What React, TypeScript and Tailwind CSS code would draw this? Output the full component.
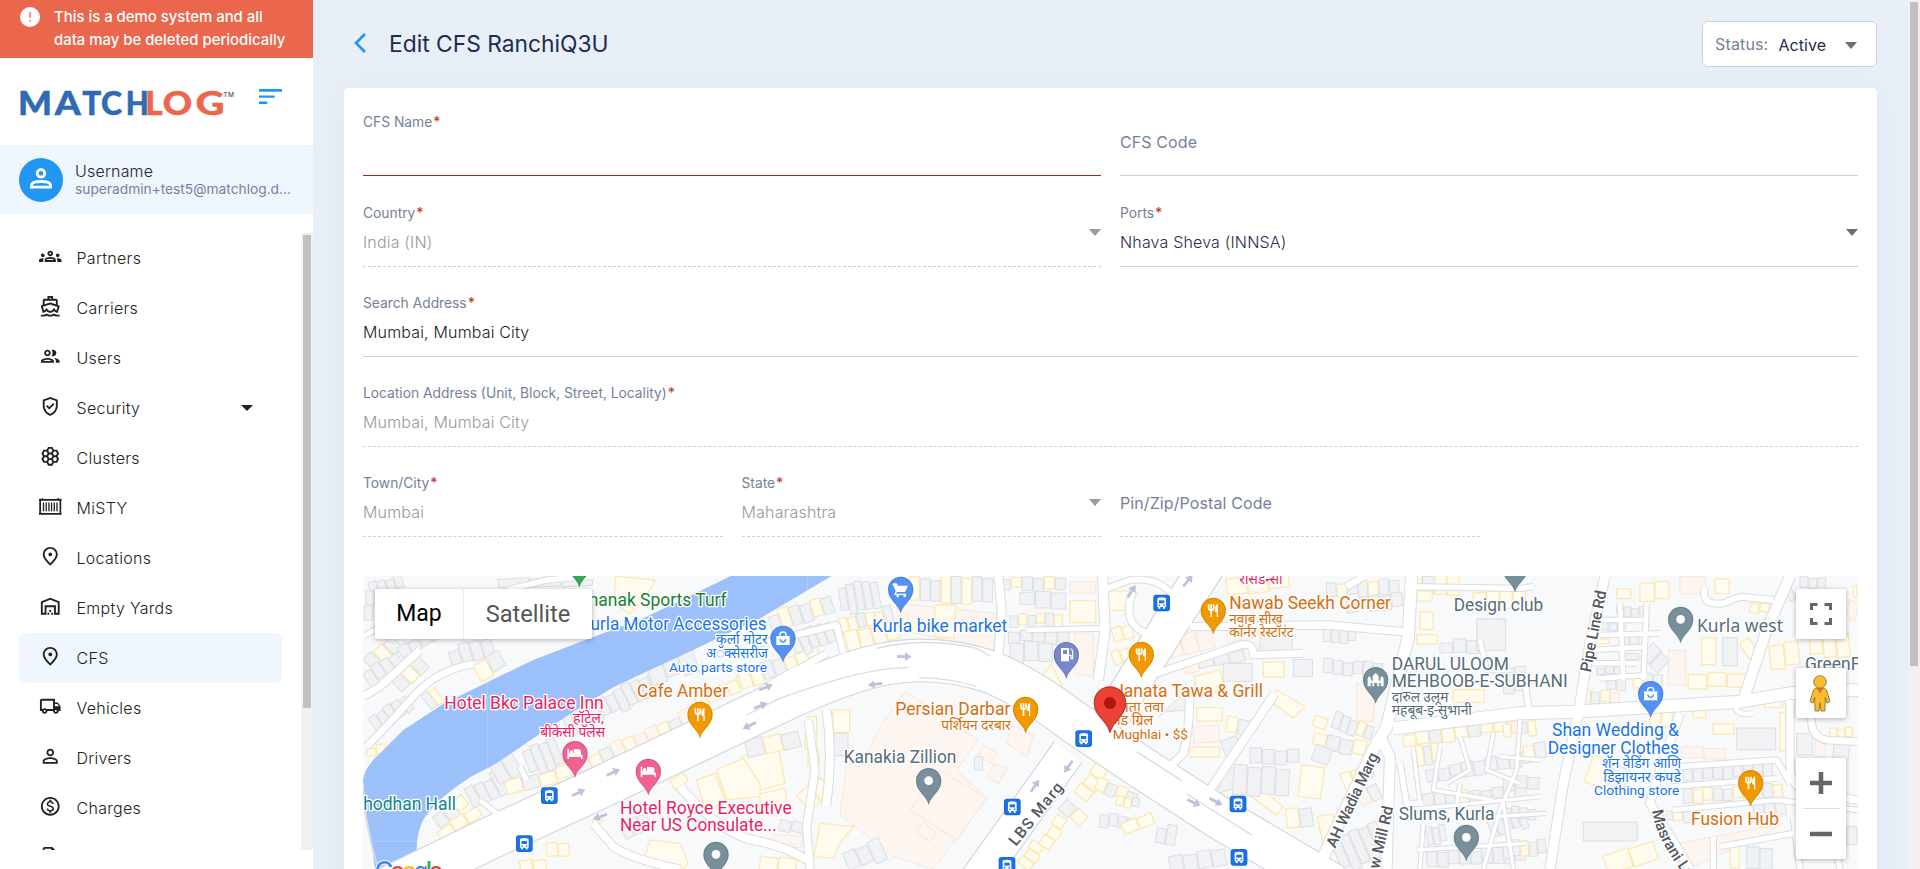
import React from "react";
import {
  MdOutlineGroups,
  MdOutlineDirectionsBoat,
  MdOutlinePeople,
  MdOutlineGppGood,
  MdOutlineHive,
  MdOutlinePlace,
  MdOutlineWarehouse,
  MdOutlineLocalShipping,
  MdPersonOutline,
  MdOutlineMonetizationOn,
  MdOutlineDescription,
} from "react-icons/md";

/* ---------- Sidebar ---------- */

function ContainerIcon({ className }: { className?: string }) {
  return (
    <svg viewBox="0 0 24 24" className={className} fill="none" stroke="currentColor">
      <path d="M0 5.2h24M0 20.200h24" strokeWidth="1.8" />
      <path d="M1.2 4v16M22.8 4v16" strokeWidth="1.8" />
      <path d="M3.6 5V3.2M20.4 5V3.2" strokeWidth="1.6" />
      <path d="M4.8 8v9.400M7.7 8v9.400M10.6 8v9.400M13.4 8v9.400M16.3 8v9.400M19.2 8v9.400" strokeWidth="1.4" />
    </svg>
  );
}

const NAV: { label: string; Icon: React.ComponentType<{ className?: string }>; active?: boolean; caret?: boolean }[] = [
  { label: "Partners", Icon: MdOutlineGroups },
  { label: "Carriers", Icon: MdOutlineDirectionsBoat },
  { label: "Users", Icon: MdOutlinePeople },
  { label: "Security", Icon: MdOutlineGppGood, caret: true },
  { label: "Clusters", Icon: MdOutlineHive },
  { label: "MiSTY", Icon: ContainerIcon },
  { label: "Locations", Icon: MdOutlinePlace },
  { label: "Empty Yards", Icon: MdOutlineWarehouse },
  { label: "CFS", Icon: MdOutlinePlace, active: true },
  { label: "Vehicles", Icon: MdOutlineLocalShipping },
  { label: "Drivers", Icon: MdPersonOutline },
  { label: "Charges", Icon: MdOutlineMonetizationOn },
  { label: "", Icon: MdOutlineDescription },
];

const LOGO: [string, number, number, string][] = [
  ["M", 54, 102, "#2f6bb5"],
  ["A", 164, 78, "#2f6bb5"],
  ["T", 247, 57, "#2f6bb5"],
  ["C", 303, 63, "#2f6bb5"],
  ["H", 377, 69, "#2f6bb5"],
  ["L", 436, 52, "#ec664e"],
  ["O", 488, 88, "#ec664e"],
  ["G", 587, 86, "#ec664e"],
];

function Logo() {
  return (
    <svg viewBox="51 262 654 93" className="h-[31px] w-[218px] overflow-visible">
      {LOGO.map(([ch, x, w, fill]) => (
        <text
          key={ch}
          x={x}
          y={346}
          textLength={w}
          lengthAdjust="spacingAndGlyphs"
          fill={fill}
          stroke={fill}
          strokeWidth="1.5"
          fontFamily="Lato, sans-serif"
          fontWeight="900"
          fontSize="99"
        >
          {ch}
        </text>
      ))}
      <text x="670" y="293" fontFamily="Inter, sans-serif" fontSize="20" textLength="32" fill="#333">
        TM
      </text>
    </svg>
  );
}

function Sidebar() {
  return (
    <aside className="flex h-full w-[313px] shrink-0 flex-col bg-white">
      <div className="flex h-[58px] gap-[14px] bg-[#ea674e] pt-[6px] pl-5 text-[14.9px] leading-[23px] font-medium text-white">
        <svg viewBox="0 0 20 20" className="mt-px size-5 shrink-0">
          <circle cx="10" cy="10" r="10" fill="#fff" />
          <path d="M10 5v6M10 12.8v1.6" stroke="#ea674e" strokeWidth="1.3" />
        </svg>
        <p className="w-[250px]">
          This is a demo system and all
          <br />
          data may be deleted periodically
        </p>
      </div>
      <div className="flex h-[87px] items-start justify-between pr-[31px] pl-[17px]">
        <div className="pt-[29px]">
          <Logo />
        </div>
        <svg viewBox="0 0 23 17" className="mt-[30px] h-[17px] w-[23px] shrink-0" fill="#2196f3">
          <path d="M0 1h23v2.8H0zM0 7.4h15.6v2.3H0zM0 13.6h8.2v2.4H0z" />
        </svg>
      </div>
      <div className="flex h-[69px] items-center gap-3 bg-[#eff6fe] pl-[19px]">
        <div className="flex size-11 items-center justify-center rounded-full bg-[#2196f3]">
          <svg viewBox="0 0 66 62" className="mb-[2px] h-[20.700px] w-[22px]" fill="none" stroke="#fff" strokeWidth="8.500">
            <circle cx="33" cy="16" r="11.500" />
            <path d="M4.500 57.500V52Q4.500 40.500 33 40.500T61.500 52V57.500Z" />
          </svg>
        </div>
        <div className="leading-[18px]">
          <div className="text-base leading-[18px] font-light tracking-[0.2px] text-[#212529]">Username</div>
          <div className="text-[13.75px] leading-[18px] text-[#7582a0]">superadmin+test5@matchlog.d...</div>
        </div>
      </div>
      <div className="mt-[19px] flex h-[617px] overflow-hidden">
        <nav className="w-[301px] shrink-0 pr-[19px] pl-[19px] text-base font-light tracking-[0.3px] text-[#212121]">
          {NAV.map(({ label, Icon, active, caret }, i) => (
            <div key={i} className={`flex h-[50px] items-center rounded-md pl-5 ${active ? "bg-[#eff6fe]" : ""}`}>
              <Icon className="mb-[3px] size-[22.5px] shrink-0" />
              <span className="ml-[15px] grow">{label}</span>
              {caret && <span className="mr-[29px] border-x-[6px] border-t-[6px] border-x-transparent border-t-[#212121]" />}
            </div>
          ))}
        </nav>
        <div className="w-3 bg-[#f1f1f1] px-0.5 pt-0.5">
          <div className="h-[473px] bg-[#c1c1c1]" />
        </div>
      </div>
    </aside>
  );
}

/* ---------- Form ---------- */

type FieldProps = {
  label: string;
  value?: string;
  required?: boolean;
  disabled?: boolean;
  select?: boolean;
  invalid?: boolean;
  tone?: string;
};

function Field({ label, value, required, disabled, select, invalid, tone = "text-[#1f2d4d]" }: FieldProps) {
  const line = invalid ? "border-solid border-[#a1281e]" : disabled ? "border-dashed border-[#ced0da]" : "border-solid border-[#ced0da]";
  const empty = value === undefined;
  return (
    <div className={`flex h-full flex-col justify-end border-b ${line}`}>
      {empty ? (
        <div className="mb-[23px] leading-5 tracking-[0.1px] text-[#75819b]">{label}</div>
      ) : (
        <>
          <div className="text-[13.8px] leading-5 text-[#75819b]">
            {label}
            {required && <span className="ml-px font-medium text-[#c0392b]">*</span>}
          </div>
          <div className={`mt-[9px] mb-[14px] flex h-5 items-start justify-between leading-5 font-light tracking-[0.17px] ${disabled ? "text-[#999]" : tone}`}>
            <span>{value}</span>
            {select && (
              <span className={`-mt-[3px] border-x-[6px] border-t-[7px] border-x-transparent ${disabled ? "border-t-[#9b9b9b]" : "border-t-[#6f6f6f]"}`} />
            )}
          </div>
        </>
      )}
    </div>
  );
}

/* ---------- Map (drawn at 3 units per pixel) ---------- */

type Tone = "y" | "g" | "p";
const FILL: Record<Tone, string> = { y: "#fffbee", g: "#f0f2f4", p: "#fdf5ef" };
const EDGE: Record<Tone, string> = { y: "#fce9b3", g: "#dcdfe3", p: "#fae6d8" };

/* x1, y1, x2, y2, count, depth, tone pattern */
type Strip = [number, number, number, number, number, number, string];
const STRIPS: Strip[] = [
  [415, 45, 700, 30, 3, 30, "g"],
  [30, 60, 130, 30, 4, 45, "g"],
  [30, 150, 30, 60, 2, 30, "gg"],
  [30, 290, 110, 210, 3, 60, "gyg"],
  [20, 330, 120, 260, 4, 50, "g"],
  [120, 250, 240, 180, 4, 45, "g"],
  [270, 265, 400, 225, 4, 60, "g"],
  [110, 350, 190, 270, 3, 55, "gyg"],
  [40, 470, 150, 390, 5, 60, "g"],
  [200, 400, 240, 370, 2, 55, "gy"],
  [350, 310, 430, 265, 2, 60, "yg"],
  [20, 545, 80, 540, 2, 30, "y"],
  [230, 760, 320, 690, 3, 50, "ggy"],
  [240, 800, 360, 720, 3, 40, "yy"],
  [330, 690, 460, 620, 5, 80, "gggg"],
  [400, 610, 470, 570, 2, 80, "gg"],
  [440, 660, 640, 600, 4, 45, "ygyy"],
  [500, 580, 600, 540, 4, 90, "ggg"],
  [620, 470, 900, 330, 11, 70, "g"],
  [660, 600, 1000, 440, 10, 60, "pygpyp"],
  [1010, 400, 1200, 310, 6, 45, "yyp"],
  [870, 320, 1010, 270, 3, 70, "g"],
  [1140, 330, 1380, 250, 7, 60, "yyggy"],
  [1300, 230, 1420, 180, 5, 70, "g"],
  [1230, 160, 1420, 100, 6, 60, "gyg"],
  [1440, 90, 1560, 70, 5, 90, "g"],
  [1440, 170, 1600, 130, 6, 50, "yyg"],
  [1460, 220, 1620, 180, 4, 70, "y"],
  [1650, 60, 1900, 60, 8, 85, "yggyg"],
  [1920, 40, 2120, 40, 6, 40, "gyg"],
  [1980, 90, 2120, 90, 3, 50, "g"],
  [1950, 150, 2110, 150, 6, 40, "gy"],
  [1945, 200, 2130, 200, 5, 40, "g"],
  [1950, 245, 2080, 245, 3, 60, "g"],
  [2130, 52, 2210, 52, 1, 40, "p"],
  [2130, 125, 2210, 125, 1, 90, "y"],
  [2245, 90, 2310, 90, 1, 80, "y"],
  [2260, 200, 2320, 180, 2, 50, "yy"],
  [2260, 270, 2310, 250, 2, 50, "yy"],
  [1160, 540, 1320, 500, 3, 55, "gy"],
  [1355, 440, 1355, 590, 3, 35, "yy"],
  [1445, 420, 1445, 560, 2, 50, "yg"],
  [1330, 700, 1400, 640, 2, 60, "y"],
  [1260, 760, 1330, 780, 2, 40, "gg"],
  [1240, 815, 1330, 820, 1, 40, "p"],
  [1460, 880, 1570, 830, 3, 70, "g"],
  [1200, 880, 1310, 895, 2, 60, "y"],
  [2160, 680, 2230, 590, 3, 50, "y"],
  [2050, 830, 2110, 740, 3, 45, "y"],
  [1990, 890, 2040, 820, 3, 45, "y"],
  [2210, 640, 2330, 690, 4, 45, "yg"],
  [2110, 700, 2170, 760, 2, 40, "gy"],
  [2220, 750, 2330, 760, 4, 40, "g"],
  [2270, 690, 2340, 700, 3, 35, "yyg"],
  [2290, 780, 2380, 740, 2, 40, "yy"],
  [2390, 790, 2450, 800, 2, 60, "g"],
  [2430, 890, 2600, 860, 4, 60, "g"],
  [2600, 50, 2790, 30, 3, 50, "y"],
  [2470, 290, 2700, 240, 5, 45, "pggg"],
  [2420, 240, 2560, 200, 3, 70, "p"],
  [2600, 200, 2680, 180, 2, 45, "p"],
  [2700, 230, 2800, 230, 1, 90, "g"],
  [2890, 190, 2990, 190, 4, 60, "g"],
  [2900, 60, 3120, 50, 7, 50, "gyg"],
  [2960, 110, 3130, 90, 5, 45, "gg"],
  [2890, 290, 3070, 300, 6, 50, "g"],
  [2800, 290, 2860, 290, 1, 60, "g"],
  [2590, 310, 2680, 310, 1, 60, "g"],
  [2510, 350, 2590, 330, 1, 60, "y"],
  [2710, 298, 2775, 298, 1, 55, "y"],
  [2510, 435, 2590, 435, 1, 42, "y"],
  [2500, 490, 2580, 485, 1, 50, "p"],
  [2490, 545, 2580, 545, 1, 40, "y"],
  [2600, 460, 2670, 470, 2, 60, "yg"],
  [2590, 540, 2640, 520, 1, 50, "g"],
  [2670, 560, 2820, 560, 4, 45, "g"],
  [2620, 630, 2790, 640, 4, 90, "gg"],
  [2860, 455, 2900, 470, 1, 32, "y"],
  [2860, 510, 3020, 540, 4, 45, "yggy"],
  [2920, 450, 3040, 490, 5, 55, "gggy"],
  [2860, 550, 2910, 570, 1, 60, "g"],
  [2820, 630, 2890, 640, 1, 95, "y"],
  [2780, 750, 2860, 740, 2, 60, "yg"],
  [2880, 780, 2930, 770, 1, 100, "y"],
  [2950, 640, 3040, 600, 3, 60, "yyg"],
  [2930, 860, 3070, 800, 5, 110, "g"],
  [3000, 690, 3060, 660, 2, 60, "pg"],
  [3150, 40, 3300, 40, 4, 70, "ygy"],
  [3170, 80, 3220, 80, 1, 35, "y"],
  [3340, 90, 3500, 90, 4, 60, "y"],
  [3180, 150, 3222, 150, 1, 60, "y"],
  [3170, 210, 3235, 210, 1, 28, "y"],
  [3240, 230, 3360, 230, 3, 40, "g"],
  [3350, 190, 3440, 190, 1, 100, "g"],
  [3280, 380, 3375, 380, 1, 42, "y"],
  [3130, 510, 3480, 460, 9, 45, "yyg"],
  [3170, 560, 3240, 550, 3, 60, "yg"],
  [3200, 620, 3520, 560, 9, 45, "gg"],
  [3190, 700, 3500, 660, 9, 45, "gggy"],
  [3200, 800, 3260, 790, 3, 60, "g"],
  [3390, 780, 3500, 740, 5, 60, "g"],
  [3200, 870, 3500, 850, 9, 50, "g"],
  [3430, 330, 3500, 330, 2, 80, "g"],
  [3430, 480, 3530, 470, 4, 45, "ypg"],
  [3490, 550, 3560, 540, 2, 60, "yg"],
  [3430, 640, 3540, 640, 3, 45, "g"],
  [3430, 730, 3530, 730, 4, 40, "g"],
  [3430, 840, 3560, 830, 5, 50, "ggy"],
  [3770, 75, 3815, 75, 1, 38, "y"],
  [3840, 65, 3930, 65, 2, 60, "y"],
  [3960, 50, 4040, 50, 1, 55, "p"],
  [4065, 45, 4110, 45, 1, 50, "y"],
  [3770, 125, 3860, 125, 4, 28, "g"],
  [3720, 170, 3800, 170, 3, 25, "g"],
  [3780, 210, 3840, 210, 2, 35, "g"],
  [3700, 215, 3750, 212, 1, 18, "y"],
  [3780, 260, 3840, 260, 1, 20, "g"],
  [3710, 300, 3790, 300, 3, 25, "g"],
  [3740, 345, 3800, 345, 2, 40, "g"],
  [3820, 330, 3910, 330, 3, 40, "ygg"],
  [3665, 380, 3780, 385, 4, 40, "ygyp"],
  [3860, 240, 3915, 290, 2, 60, "g"],
  [3925, 290, 3980, 290, 1, 120, "p"],
  [4025, 245, 4070, 245, 1, 80, "y"],
  [4088, 245, 4135, 245, 1, 85, "g"],
  [3985, 330, 4160, 330, 3, 45, "y"],
  [4150, 240, 4180, 220, 1, 60, "y"],
  [4230, 260, 4320, 250, 2, 75, "y"],
  [4280, 70, 4300, 60, 1, 50, "g"],
  [4170, 110, 4230, 120, 2, 35, "yy"],
  [4320, 40, 4400, 40, 3, 40, "g"],
  [4480, 60, 4494, 60, 1, 40, "y"],
  [4460, 120, 4494, 130, 1, 60, "p"],
  [4350, 230, 4470, 220, 3, 70, "y"],
  [4060, 475, 4125, 475, 1, 42, "y"],
  [4000, 430, 4040, 428, 1, 32, "y"],
  [4130, 510, 4250, 510, 1, 90, "g"],
  [4260, 480, 4295, 480, 1, 140, "y"],
  [4215, 400, 4270, 400, 1, 30, "y"],
  [3965, 550, 4100, 550, 2, 40, "p"],
  [3970, 610, 4240, 600, 9, 50, "g"],
  [3970, 680, 4270, 660, 10, 45, "gyyg"],
  [3910, 740, 4000, 735, 3, 35, "gy"],
  [3670, 785, 3835, 785, 1, 60, "g"],
  [3685, 600, 3800, 640, 2, 110, "yg"],
  [3870, 450, 3940, 450, 2, 60, "y"],
  [3740, 890, 3890, 840, 2, 60, "y"],
  [4110, 860, 4140, 860, 1, 90, "y"],
  [4160, 865, 4240, 865, 2, 80, "g"],
  [4180, 720, 4280, 710, 3, 40, "g"],
  [4310, 520, 4360, 520, 1, 70, "g"],
  [4365, 530, 4400, 530, 1, 70, "p"],
  [4410, 490, 4480, 490, 3, 30, "y"],
  [4420, 540, 4470, 545, 1, 50, "g"],
  [4460, 800, 4494, 800, 1, 60, "g"],
  [700, 760, 730, 745, 1, 20, "y"],
  [790, 790, 870, 750, 3, 50, "g"],
  [940, 650, 980, 620, 1, 40, "y"],
  [560, 840, 630, 835, 2, 40, "y"],
  [480, 890, 560, 880, 2, 35, "y"],
];

const POLYS: [string, Tone][] = [
  ["1635,365 1855,510 1790,600 1880,685 1720,897 1600,860 1440,735 1460,580 1500,590 1560,470", "p"],
  ["1740,600 1880,685 1790,810 1650,720", "p"],
  ["1690,755 1730,790 1710,815 1668,785", "p"],
  ["1870,525 1915,550 1890,580 1855,555", "p"],
  ["1900,580 1942,595 1915,640 1882,622", "p"],
  ["1955,465 2022,495 2000,560 1940,520", "p"],
  ["1843,560 1868,560 1868,600 1843,600", "g"],
  ["2075,282 2122,385 2040,325", "y"],
  ["2145,190 2200,190 2200,320 2145,310", "p"],
  ["1610,100 1910,130 1900,240 1620,180", "p"],
  ["1725,105 1787,105 1782,205 1725,200", "y"],
  ["2750,360 2835,410 2800,445 2735,395", "y"],
  ["2665,625 2770,710 2750,735 2640,655", "y"],
  ["2585,590 2660,600 2640,650 2575,670", "g"],
  ["1145,560 1255,535 1275,640 1180,665", "y"],
  ["1380,760 1480,770 1440,820 1420,865 1362,860", "y"],
  ["765,18 885,30 870,60 810,132 765,100", "y"],
  ["870,810 960,820 985,880 970,897 855,860", "y"],
  ["1010,630 1065,610 1100,700 1035,720", "y"],
  ["1070,600 1150,565 1200,640 1200,680 1100,690", "y"],
  ["1200,672 1275,655 1280,700 1200,720", "y"],
  ["2990,340 3045,350 3040,455 2990,450", "p"],
  ["3960,820 4270,760 4200,800 4000,890", "p"],
  ["2395,440 2480,360 2490,420 2420,425", "g"],
];

const ROADS: [string, number][] = [
  ["M9 380L60 350L180 240", 22],
  ["M340 282Q230 300 160 380T20 530", 20],
  ["M440 60L560 30L700 18", 16],
  ["M9 200L60 170", 14],
  ["M480 590L500 630", 16],
  ["M360 690L410 730", 14],
  ["M1140 410Q1240 330 1330 290L1400 250", 20],
  ["M700 760L760 830Q820 870 960 897", 22],
  ["M960 650Q1080 790 1180 810T1340 870", 24],
  ["M1400 420Q1420 560 1398 710", 24],
  ["M1345 450L1365 600L1340 770L1350 897", 22],
  ["M1160 230L1430 165L1450 250", 18],
  ["M1915 18L1925 120L1915 270", 24],
  ["M2228 18L2235 180L2215 330", 28],
  ["M2000 180L2230 175", 14],
  ["M2230 60L2310 30Q2400 20 2440 80", 18],
  ["M2320 60Q2280 160 2360 190", 20],
  ["M2490 170L2900 165L3130 185", 22],
  ["M2390 310L2640 225Q2680 215 2680 255L2830 250", 20],
  ["M2490 335Q2490 480 2470 550L2430 590", 22],
  ["M2745 370L2550 660", 24],
  ["M2960 50L3010 20", 20],
  ["M3155 18L3145 200L3080 470L3040 540L2890 860L2870 897", 34],
  ["M3060 500L3090 560L3085 700L3080 897", 30],
  ["M3120 580L3140 700L3190 700", 16],
  ["M3100 475L3480 430L3640 425L4140 395L4290 370L4494 360", 36],
  ["M3135 50L3480 55L3520 50", 16],
  ["M3510 440L3495 340", 16],
  ["M3735 18L3690 220L3655 430L3610 640L3570 897", 28],
  ["M4290 18L4220 180L4150 390", 30],
  ["M4035 50Q4020 110 4090 100L4140 80L4240 90", 18],
  ["M3960 430L3900 600L3870 700L3990 897", 24],
  ["M4290 390L4290 590Q4290 650 4350 670L4494 690", 22],
  ["M4355 440Q4350 500 4400 510L4494 515", 20],
  ["M3960 590L4250 570L4290 640", 16],
  ["M3930 650L4250 625", 14],
  ["M3940 720L4250 690L4494 720", 14],
  ["M4130 400Q4120 440 4180 430", 14],
  ["M3720 150L3850 150M3720 195L3900 190M3700 240L3860 230M3700 280L3830 280M3780 100L3790 330M3860 100L3850 330M3720 325L3860 315", 14],
  ["M3160 540L3180 700M3240 530L3220 660L3400 690M3300 500L3330 600L3260 640M3400 490L3380 600L3480 640M3480 450L3470 600L3420 720L3370 897M3140 720L3540 680M3190 760L3180 897M3290 700L3300 640M3420 560L3540 570M3400 740L3560 730M3430 700L3460 897M3170 840L3500 820", 10],
  ["M4060 800L4060 897M4080 830L4300 790M4300 740L4320 897M4410 740L4440 897", 16],
  ["M3360 210L3380 300L3450 300", 14],
];

const HIGHWAYS: [string, number][] = [
  ["M20 985L400 800L700 662L1240 405Q1440 310 1560 285Q1720 250 1890 305Q2010 355 2140 455L2340 590L2580 745L2920 945", 124],
  ["M2125 545L1850 930", 100],
  ["M2255 440L2425 170L2540 -10", 104],
];

const PINS: [number, number, string, "fork" | "bed" | "cart" | "bag" | "fuel" | "dot" | "dome" | "none"][] = [
  [658, -20, "#34a853", "none"],
  [1020, 433, "#f29900", "fork"],
  [1997, 418, "#f29900", "fork"],
  [2344, 253, "#f29900", "fork"],
  [2560, 121, "#f29900", "fork"],
  [4172, 638, "#f29900", "fork"],
  [645, 551, "#f06292", "bed"],
  [865, 604, "#f06292", "bed"],
  [1622, 58, "#5491f5", "cart"],
  [1269, 205, "#5491f5", "bag"],
  [3872, 371, "#5491f5", "bag"],
  [2119, 254, "#7986cb", "fuel"],
  [1068, 853, "#78909c", "dot"],
  [1706, 632, "#78909c", "dot"],
  [3319, 802, "#78909c", "dot"],
  [3962, 148, "#78909c", "dot"],
  [3465, -5, "#78909c", "none"],
  [3047, 329, "#78909c", "dome"],
];

const GLYPHS = {
  none: null,
  dot: <circle r="13" fill="#fff" />,
  fork: (
    <g fill="none" stroke="#fff">
      <path d="M-14 -18v12q0 6 7.500 6t7.500 -6v-12M-6.500 -18v38" strokeWidth="5" />
      <path d="M12 20v-38q-8 6 -6 22h6z" strokeWidth="3" fill="#fff" />
    </g>
  ),
  bed: (
    <g fill="#fff">
      <path d="M-23 -14h5v18h36v-10q0 -7 -8 -7h-14v12h-13h-1v5h41v12h-5v-6h-36v6h-5z" />
      <circle cx="-11" cy="-5" r="5" />
    </g>
  ),
  cart: (
    <g fill="#fff">
      <path d="M-22 -18h10l4 7h30l-9 19h-24l-3 5h30v4h-36l5 -12l-8 -18h-3z" />
      <circle cx="-9" cy="20" r="4" />
      <circle cx="12" cy="20" r="4" />
    </g>
  ),
  bag: (
    <g>
      <path d="M-20 -7h40v27h-40z" fill="#fff" />
      <path d="M-9 -7v-4q0 -8 9 -8t9 8v4" fill="none" stroke="#fff" strokeWidth="4" />
      <path d="M-9 2q2 9 9 9t9 -9" fill="none" stroke="#5491f5" strokeWidth="4" />
    </g>
  ),
  fuel: (
    <g>
      <path d="M-16 -20h24v40h-24z" fill="#fff" />
      <path d="M-10 -14h12v12h-12z" fill="#7986cb" />
      <path d="M8 2h6v10h5v-24l-6 -6" fill="none" stroke="#fff" strokeWidth="3.500" />
    </g>
  ),
  dome: (
    <path
      d="M-24 20V-4l5 -7l5 7v7h5v-13q0 -2 9 -10q9 8 9 10v13h5v-7l5 -7l5 7V20h-9v-10h-5v10h-5v-8q-5 -6 -10 0v8h-5v-10h-5v10z"
      fill="#fff"
    />
  ),
};

const BUSES: [number, number][] = [
  [568, 677],
  [493, 821],
  [2171, 506],
  [1957, 711],
  [1941, 886],
  [2405, 99],
  [2634, 702],
  [2637, 862],
];

const ARROWS: [number, number, number][] = [
  [760, 607, -25],
  [656, 668, -25],
  [720, 740, 160],
  [1168, 467, 155],
  [1202, 407, -22],
  [1218, 352, -22],
  [1633, 260, 2],
  [1545, 343, 172],
  [2125, 590, 125],
  [2025, 647, -55],
  [2315, 64, -58],
  [2484, 32, -50],
  [2502, 698, 25],
  [2568, 695, 28],
];

const BLUE = "#1a73e8";
const ORANGE = "#d56e0c";
const PINK = "#e91e63";
const SLATE = "#546e7a";

/* text, x, baseline, colour, size, anchor, fitted width (0 = natural) */
type Label = [string, number, number, string, number, "start" | "end", number];
const LABELS: Label[] = [
  ["nanak Sports Turf", 1100, 108, "#188038", 52.3, "end", 414],
  ["Kurla Motor Accessories", 1220, 181, BLUE, 52.3, "end", 560],
  ["कुर्ला मोटर", 1223, 223, BLUE, 43, "end", 155],
  ["अॅक्सेसरीज", 1224, 265, BLUE, 43, "end", 186],
  ["Auto parts store", 1221, 306, BLUE, 41, "end", 294],
  ["Kurla bike market", 1537, 185, BLUE, 52.3, "start", 405],
  ["Cafe Amber", 831, 380, ORANGE, 52.3, "start", 273],
  ["Hotel Bkc Palace Inn", 253, 416, PINK, 52.3, "start", 478],
  ["हॉटेल,", 731, 460, PINK, 43, "end", 92],
  ["बीकेसी पॅलेस", 735, 501, PINK, 43, "end", 194],
  ["Yashodhan Hall", 288, 721, "#12848f", 52.3, "end", 0],
  ["Hotel Royce Executive", 780, 731, PINK, 52.3, "start", 515],
  ["Near US Consulate...", 780, 783, PINK, 52.3, "start", 470],
  ["Persian Darbar", 1606, 435, ORANGE, 52.3, "start", 345],
  ["पर्शियन दरबार", 1953, 479, ORANGE, 43, "end", 209],
  ["Kanakia Zillion", 1451, 579, SLATE, 52.3, "start", 338],
  ["Janata Tawa & Grill", 2709, 382, ORANGE, 52.3, "end", 0],
  ["जनता तवा", 2412, 425, ORANGE, 43, "end", 0],
  ["अँड ग्रिल", 2380, 466, ORANGE, 43, "end", 0],
  ["Mughlai • $$", 2258, 507, ORANGE, 41, "start", 226],
  ["रेसिडेन्सी", 2638, 41, PINK, 43, "start", 130],
  ["Nawab Seekh Corner", 2608, 118, ORANGE, 52.3, "start", 485],
  ["नवाब सीख", 2608, 161, ORANGE, 43, "start", 160],
  ["कॉर्नर रेस्टॉरंट", 2608, 202, ORANGE, 43, "start", 193],
  ["DARUL ULOOM", 3095, 300, SLATE, 52.3, "start", 352],
  ["MEHBOOB-E-SUBHANI", 3095, 352, SLATE, 52.3, "start", 528],
  ["दारुल उलूम", 3095, 396, SLATE, 43, "start", 170],
  ["महबूब-इ-सुभानी", 3095, 436, SLATE, 43, "start", 241],
  ["Design club", 3281, 122, SLATE, 52.3, "start", 269],
  ["Slums, Kurla", 3116, 750, SLATE, 52.3, "start", 287],
  ["GreenField", 4335, 300, SLATE, 52.3, "start", 0],
  ["Shan Wedding &", 3957, 499, BLUE, 52.3, "end", 381],
  ["Designer Clothes", 3957, 551, BLUE, 52.3, "end", 394],
  ["शॅन वेडिंग आणि", 3963, 594, BLUE, 43, "end", 237],
  ["डिझायनर कपडे", 3963, 635, BLUE, 43, "end", 233],
  ["Clothing store", 3958, 676, BLUE, 41, "end", 256],
  ["Fusion Hub", 3993, 766, ORANGE, 52.3, "start", 264],
];

function StripBlocks({ s }: { s: Strip }) {
  const [x1, y1, x2, y2, n, depth, tones] = s;
  const len = Math.hypot(x2 - x1, y2 - y1);
  const deg = (Math.atan2(y2 - y1, x2 - x1) * 180) / Math.PI;
  const step = len / n;
  return (
    <g transform={`translate(${x1} ${y1}) rotate(${deg})`}>
      {Array.from({ length: n }, (_, i) => {
        const tone = tones[i % tones.length] as Tone;
        const jitter = ((i * 37 + x1 * 7) % 11) - 5;
        const h = depth * (1 - ((i * 29 + y1) % 7) * 0.045);
        return (
          <rect
            key={i}
            x={i * step}
            y={-h / 2 + jitter}
            width={Math.max(step - 3, 8)}
            height={h}
            fill={FILL[tone]}
            stroke={EDGE[tone]}
            strokeWidth={tone === "y" ? 4 : 3}
          />
        );
      })}
    </g>
  );
}

function CityMap() {
  return (
    <svg viewBox="9 18 4485 879" className="block h-[293px] w-[1495px]" fontFamily='Roboto, "Noto Sans", sans-serif'>
      <rect x="9" y="18" width="4485" height="879" fill="#f8f9fb" />
      {POLYS.map(([pts, t]) => (
        <polygon key={pts} points={pts} fill={FILL[t]} stroke={EDGE[t]} strokeWidth={t === "y" ? 4 : 3} />
      ))}
      {STRIPS.map((s, i) => (
        <StripBlocks key={i} s={s} />
      ))}
      <path
        d="M1112 18L985 80L850 145L690 205L520 270L400 328L250 402L130 480L60 550Q15 590 9 630V690L30 790L45 897H160L170 840Q170 780 195 740Q240 680 330 622L410 580L520 505L640 425L760 352L870 300L1000 240L1100 192L1200 145L1415 18Z"
        fill="#9cc0f9"
      />
      <g fill="none" strokeLinejoin="round">
        {ROADS.map(([d, w]) => (
          <path key={d} d={d} stroke="#dadde1" strokeWidth={w + 6} />
        ))}
        {HIGHWAYS.map(([d, w]) => (
          <path key={d} d={d} stroke="#d3d6db" strokeWidth={w + 7} />
        ))}
        {ROADS.map(([d, w]) => (
          <path key={d} d={d} stroke="#fff" strokeWidth={w} />
        ))}
        {HIGHWAYS.map(([d, w]) => (
          <path key={d} d={d} stroke="#fff" strokeWidth={w} />
        ))}
        <path d="M1160 435L1260 385Q1520 290 1645 293M1677 323Q1770 325 1850 350" stroke="#d9dce0" strokeWidth="4" />
        <path d="M1548 235Q1700 200 1850 235L1890 258M2330 545L2465 632M2480 672L2675 795" stroke="#d9dce0" strokeWidth="4" />
        <path d="M9 640Q12 760 50 880" stroke="#dadde1" strokeWidth="5" />
      </g>
      <path d="M382 18v879M1342 18v879M2302 18v879M3262 18v879M4222 18v879M9 814h4485" stroke="#fff" strokeOpacity="0.3" strokeWidth="2" />

      {ARROWS.map(([x, y, r], i) => (
        <path
          key={i}
          d="M-22 -4H2V-13L22 0L2 13V4H-22Z"
          transform={`translate(${x} ${y}) rotate(${r})`}
          fill="#bcc2d8"
        />
      ))}
      {BUSES.map(([x, y], i) => (
        <g key={i} transform={`translate(${x} ${y})`}>
          <rect x="-25" y="-25" width="50" height="50" rx="9" fill="#1967d2" />
          <rect x="-22" y="-23" width="44" height="45" rx="7" fill="#1a73e8" />
          <path d="M-13 -12q0 -5 13 -5t13 5v24h-3v5h-6v-5h-8v5h-6v-5h-3z" fill="#fff" />
          <path d="M-8 -8h16v9h-16z" fill="#1a73e8" />
          <circle cx="-7" cy="7" r="2.500" fill="#1a73e8" />
          <circle cx="7" cy="7" r="2.500" fill="#1a73e8" />
        </g>
      ))}

      <g stroke="#fff" strokeWidth="8" strokeLinejoin="round" style={{ paintOrder: "stroke" }}>
        {LABELS.map(([t, x, y, fill, size, anchor, w]) => (
          <text
            key={t}
            x={x}
            y={y}
            fill={fill}
            fontSize={size}
            textAnchor={anchor}
            {...(w ? { textLength: w, lengthAdjust: "spacingAndGlyphs" as const } : {})}
          >
            {t}
          </text>
        ))}
        <text x="4011" y="186" fill={SLATE} fontSize="52.300" fontFamily='"Noto Sans", sans-serif' textLength="258">
          Kurla west
        </text>
        <g fill="#54595f" fontSize="47" fontWeight="500">
          <text transform="translate(1968 830) rotate(-51)" textLength="228">
            LBS Marg
          </text>
          <text transform="translate(2926 836) rotate(-65)" textLength="308">
            AH Wadia Marg
          </text>
          <text transform="translate(3100 712) rotate(-77)" textAnchor="end">
            New Mill Rd
          </text>
          <text transform="translate(3692 308) rotate(-79)" textLength="248">
            Pipe Line Rd
          </text>
          <path id="masrani" d="M3877 722C3885 790 3925 850 3985 935" fill="none" stroke="none" />
          <text>
            <textPath href="#masrani">Masrani Ln</textPath>
          </text>
        </g>
      </g>

      {PINS.map(([x, y, c, k], i) => (
        <g key={i} transform={`translate(${x} ${y})`}>
          <path d="M0 72C-6 44 -38 34 -38 0A38 38 0 0 1 38 0C38 34 6 44 0 72Z" fill={c} />
          <path d="M0 70C-6 44 -36 34 -36 0A36 36 0 0 1 36 0C36 34 6 44 0 70Z" fill="none" stroke="#000" strokeOpacity="0.12" strokeWidth="3" />
          {GLYPHS[k]}
        </g>
      ))}
      <g transform="translate(2250 400)">
        <path d="M0 88C-6 52 -47 40 -47 -2A47 47 0 0 1 47 -2C47 40 6 52 0 88Z" fill="#ea4335" stroke="#c5372c" strokeWidth="4" />
        <circle r="18" cy="-1" fill="#b31412" />
      </g>

      <text x="44" y="931" fontFamily="Inter, sans-serif" fontWeight="500" fontSize="76" textLength="206" stroke="#fff" strokeWidth="6" style={{ paintOrder: "stroke" }}>
        <tspan fill="#4285f4">G</tspan>
        <tspan fill="#ea4335">o</tspan>
        <tspan fill="#fbbc04">o</tspan>
        <tspan fill="#4285f4">g</tspan>
        <tspan fill="#34a853">l</tspan>
        <tspan fill="#ea4335">e</tspan>
      </text>
    </svg>
  );
}

function MapPanel() {
  return (
    <div className="relative mt-[39px] h-[293px] w-[1495px] overflow-hidden">
      <CityMap />
      <div className="absolute top-[13px] left-3 flex h-[50px] rounded-[2px] bg-white font-[Roboto,sans-serif] text-[23px] shadow-[0_1px_5px_rgba(0,0,0,0.3)]">
        <div className="flex w-[89px] items-center justify-center border-r border-[#ececec] pt-px font-normal text-black">Map</div>
        <div className="flex w-[128px] items-center justify-center pt-px text-[23.6px] text-[#565656]">Satellite</div>
      </div>
      <div className="absolute top-[13px] right-3 flex size-[50px] items-center justify-center rounded-[2px] bg-white shadow-[0_1px_5px_rgba(0,0,0,0.3)]">
        <svg viewBox="0 0 22 22" className="size-[22px]" fill="none" stroke="#666" strokeWidth="3">
          <path d="M1.500 7V1.500H7.500M14.500 1.500H20.500V7M20.500 15V20.500H14.500M7.500 20.500H1.500V15" />
        </svg>
      </div>
      <div className="absolute top-[92px] right-3 flex size-[50px] items-center justify-center rounded-[2px] bg-white shadow-[0_1px_5px_rgba(0,0,0,0.3)]">
        <svg viewBox="0 0 66 112" className="mr-[2px] h-[37px] w-[22px]" fill="#fbbc2c" stroke="#7a6a3a" strokeWidth="2.500" strokeLinejoin="round">
          <path d="M20 40H46Q53 42 55 52L63 80L54 85L49 68L48 109H36L33 84L30 109H18L17 68L12 85L3 80L11 52Q13 42 20 40Z" />
          <path d="M23 41L33 56L43 41Z" fill="#e37426" stroke="none" />
          <circle cx="33" cy="21" r="19" />
        </svg>
      </div>
      <div className="absolute top-[182px] right-3 flex h-[101px] w-[50px] flex-col items-center rounded-[2px] bg-white shadow-[0_1px_5px_rgba(0,0,0,0.3)]">
        <svg viewBox="0 0 22 22" className="my-[14px] size-[22px] shrink-0" fill="none" stroke="#666" strokeWidth="4.500">
          <path d="M11 0V22M0 11H22" />
        </svg>
        <div className="h-px w-[37px] shrink-0 bg-[#e0e0e0]" />
        <svg viewBox="0 0 22 22" className="my-[14px] size-[22px] shrink-0" fill="none" stroke="#666" strokeWidth="4.500">
          <path d="M0 11H22" />
        </svg>
      </div>
    </div>
  );
}

/* ---------- Page ---------- */

export default function App() {
  return (
    <div className="flex h-[869px] w-[1920px] overflow-hidden bg-[#e8eff7] font-[Inter,sans-serif] text-base">
      <Sidebar />
      <main className="flex min-w-0 grow flex-col overflow-hidden pr-[31px] pl-[31px]">
        <header className="flex h-[88px] shrink-0 items-center">
          <svg viewBox="0 0 12 20" className="mb-[3px] ml-[10px] h-5 w-3" fill="none" stroke="#2196f3" strokeWidth="2.700">
            <path d="M11 1L2 10L11 19" />
          </svg>
          <h1 className="ml-[23px] text-[22.8px] leading-7 font-normal text-[#1c2d50]">Edit CFS RanchiQ3U</h1>
          <div className="ml-auto flex h-[46px] w-[175px] items-center rounded-md border border-[#ced0da] bg-white pr-[19px] pl-3">
            <span className="tracking-[0.15px] text-[#75819b]">Status:</span>
            <span className="mt-[2px] ml-[10px] tracking-[0.1px] text-[#1f2d4d]">Active</span>
            <span className="mt-[2px] ml-auto border-x-[6px] border-t-[7px] border-x-transparent border-t-[#6f6f6f]" />
          </div>
        </header>
        <section className="flex h-[900px] shrink-0 flex-col rounded-[5px] bg-white px-[19px] shadow-[0_2px_30px_rgba(120,150,200,0.08)]">
          <div className="grid h-[88px] shrink-0 grid-cols-2 gap-x-[19px]">
            <Field label="CFS Name" value="" required invalid />
            <Field label="CFS Code" />
          </div>
          <div className="grid h-[91px] shrink-0 grid-cols-2 gap-x-[19px]">
            <Field label="Country" value="India (IN)" required disabled select />
            <Field label="Ports" value="Nhava Sheva (INNSA)" required select />
          </div>
          <div className="h-[90px] shrink-0">
            <Field label="Search Address" value="Mumbai, Mumbai City" required tone="text-[#212121]" />
          </div>
          <div className="h-[90px] shrink-0">
            <Field label="Location Address (Unit, Block, Street, Locality)" value="Mumbai, Mumbai City" required disabled />
          </div>
          <div className="grid h-[90px] shrink-0 grid-cols-4 gap-x-[19px]">
            <Field label="Town/City" value="Mumbai" required disabled />
            <Field label="State" value="Maharashtra" required disabled select />
            <Field label="Pin/Zip/Postal Code" disabled />
          </div>
          <MapPanel />
        </section>
      </main>
      <div className="h-full w-3 shrink-0 bg-[#f1f1f1] px-0.5 pt-0.5">
        <div className="h-[664px] bg-[#c1c1c1]" />
      </div>
    </div>
  );
}
